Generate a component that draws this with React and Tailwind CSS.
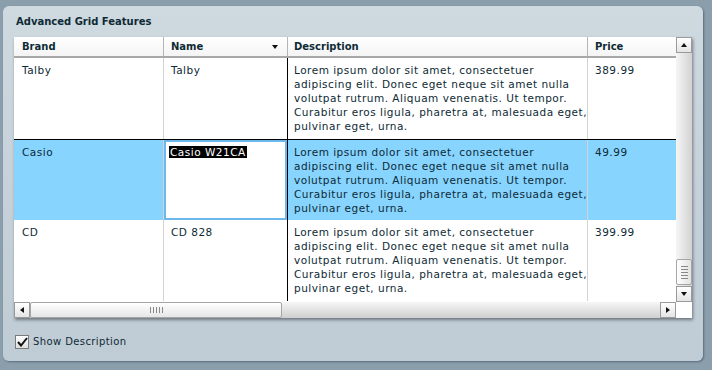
import React from 'react';

const loremLines = [
  'Lorem ipsum dolor sit amet, consectetuer',
  'adipiscing elit. Donec eget neque sit amet nulla',
  'volutpat rutrum. Aliquam venenatis. Ut tempor.',
  'Curabitur eros ligula, pharetra at, malesuada eget,',
  'pulvinar eget, urna.',
];

const rows = [
  { brand: 'Talby', name: 'Talby', price: '389.99' },
  { brand: 'Casio', name: 'Casio W21CA', price: '49.99', selected: true },
  { brand: 'CD', name: 'CD 828', price: '399.99' },
];

function Arrow({ dir }) {
  const pts = {
    up: '1,5 4,1 7,5',
    down: '1,1 4,5 7,1',
    left: '5,1 1,4 5,7',
    right: '1,1 5,4 1,7',
  }[dir];
  const vert = dir === 'up' || dir === 'down';
  return (
    <svg width={vert ? 8 : 6} height={vert ? 6 : 8} viewBox={vert ? '0 0 8 6' : '0 0 6 8'}>
      <polygon points={pts} fill="#111" />
    </svg>
  );
}

function ScrollButton({ dir }) {
  return (
    <div className="w-[16px] h-[16px] shrink-0 flex items-center justify-center bg-gradient-to-b from-white to-[#e4e4e4] border border-[#9a9a9a]">
      <Arrow dir={dir} />
    </div>
  );
}

export default function App() {
  return (
    <div
      className="w-[712px] h-[370px] bg-[#8a9eac] pt-[6px] pl-[3px]"
      style={{ fontFamily: '"DejaVu Sans", Verdana, sans-serif' }}
    >
      <div className="w-[700px] h-[355px] rounded-[6px] bg-gradient-to-b from-[#cfd9e0] via-[#c6d1d9] to-[#c0ccd5] shadow-[1px_1px_2px_rgba(40,60,80,0.5)] px-[11px] flex flex-col">
        <div className="h-[31px] pl-[2px] flex items-center text-[10px] font-bold text-[#0e2a35]">
          Advanced Grid Features
        </div>

        <div className="w-[678px] h-[281px] bg-white flex flex-col shadow-[1px_2px_3px_rgba(40,50,60,0.55)]">
          <div className="flex flex-1 min-h-0">
            <div className="flex-1 flex flex-col text-[#0e2a35]">
              {/* header */}
              <div className="flex h-[21px] border-b-2 border-[#a8a8a8] text-[10px] font-bold bg-gradient-to-b from-white to-[#f4f4f4]">
                <div className="w-[150px] pl-[8px] flex items-center border-r border-[#b5b5b5]">Brand</div>
                <div className="w-[124px] pl-[7px] pr-[8px] flex items-center justify-between border-r border-[#b5b5b5]">
                  <span>Name</span>
                  <Arrow dir="down" />
                </div>
                <div className="w-[300px] pl-[6px] flex items-center border-r border-[#b5b5b5]">Description</div>
                <div className="flex-1 pl-[7px] flex items-center">Price</div>
              </div>

              {rows.map((r, i) => (
                <div
                  key={i}
                  className={
                    'flex h-[81px] text-[10.5px] tracking-[0.5px] leading-[14px] ' +
                    (r.selected ? 'bg-[#87d4ff] border-t border-black' : 'bg-white')
                  }
                >
                  <div className="w-[150px] pl-[8px] pt-[5px] border-r border-[#d4d4d4]">{r.brand}</div>
                  {r.selected ? (
                    <div className="w-[123px] bg-white border-2 border-[#6cb8ec] pl-[3px] pt-[3px]">
                      <span className="bg-black text-white px-[1px]">{r.name}</span>
                    </div>
                  ) : (
                    <div className="w-[123px] pl-[7px] pt-[5px]">{r.name}</div>
                  )}
                  <div className="w-[301px] pl-[6px] pt-[5px] border-r border-[#d4d4d4] border-l border-l-black overflow-hidden whitespace-nowrap">
                    {loremLines.map((l, j) => (
                      <div key={j}>{l}</div>
                    ))}
                  </div>
                  <div className="flex-1 pl-[7px] pt-[5px]">{r.price}</div>
                </div>
              ))}
            </div>

            {/* vertical scrollbar */}
            <div className="w-[16px] flex flex-col bg-gradient-to-r from-[#f6f6f6] to-[#d2d2d2]">
              <ScrollButton dir="up" />
              <div className="flex-1 flex flex-col justify-end">
                <div className="h-[26px] mb-[1px] bg-gradient-to-r from-white to-[#e2e2e2] border border-[#a5a5a5] rounded-[2px] flex flex-col items-center justify-center gap-[2px]">
                  <div className="w-[7px] h-px bg-[#888]" />
                  <div className="w-[7px] h-px bg-[#888]" />
                  <div className="w-[7px] h-px bg-[#888]" />
                  <div className="w-[7px] h-px bg-[#888]" />
                  <div className="w-[7px] h-px bg-[#888]" />
                </div>
              </div>
              <ScrollButton dir="down" />
            </div>
          </div>

          {/* horizontal scrollbar */}
          <div className="h-[16px] flex">
            <div className="flex-1 flex bg-gradient-to-b from-[#f6f6f6] to-[#cfcfcf]">
              <ScrollButton dir="left" />
              <div className="w-[252px] h-[16px] bg-gradient-to-b from-white to-[#e6e6e6] border border-[#a5a5a5] rounded-[2px] flex items-center justify-center gap-[2px]">
                <div className="w-px h-[6px] bg-[#888]" />
                <div className="w-px h-[6px] bg-[#888]" />
                <div className="w-px h-[6px] bg-[#888]" />
                <div className="w-px h-[6px] bg-[#888]" />
                <div className="w-px h-[6px] bg-[#888]" />
              </div>
              <div className="flex-1" />
              <ScrollButton dir="right" />
            </div>
            <div className="w-[16px] bg-white" />
          </div>
        </div>

        <div className="flex items-center gap-[4px] mt-[16px] pl-[1px] text-[10px] text-[#0e2a35]">
          <div className="w-[14px] h-[14px] border border-[#7b7b7b] bg-gradient-to-b from-white to-[#dedede] flex items-center justify-center">
            <svg width="11" height="10" viewBox="0 0 11 10">
              <path d="M1 5 L4 8.5 L10 1" stroke="#111" strokeWidth="2" fill="none" />
            </svg>
          </div>
          <span className="tracking-[0.4px]">Show Description</span>
        </div>
      </div>
    </div>
  );
}
